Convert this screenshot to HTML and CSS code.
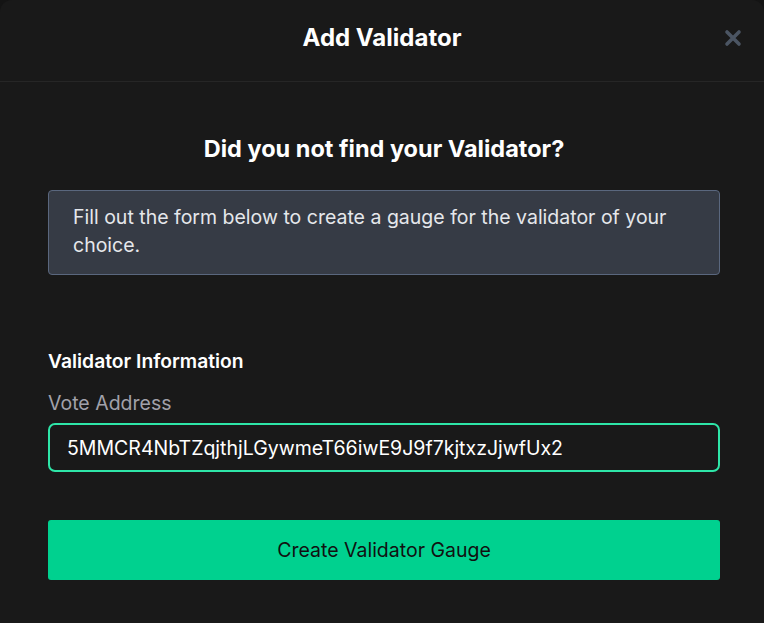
FILE: index.html
```html
<!DOCTYPE html>
<html>
<head>
<meta charset="utf-8">
<link rel="stylesheet" href="styles.css">
</head>
<body>
<div class="modal">
  <header class="modal-header">
    <h1 class="modal-title">Add Validator</h1>
    <button class="close-btn" aria-label="Close">
      <svg width="18" height="18" viewBox="0 0 18 18"><path d="M3 3 L15 15 M15 3 L3 15" stroke="#4b5563" stroke-width="3.6" stroke-linecap="round"/></svg>
    </button>
  </header>
  <div class="modal-body">
    <h2 class="question">Did you not find your Validator?</h2>
    <div class="info-box">Fill out the form below to create a gauge for the validator of your choice.</div>
    <h3 class="section-title">Validator Information</h3>
    <label class="field-label">Vote Address</label>
    <div class="input">5MMCR4NbTZqjthjLGywmeT66iwE9J9f7kjtxzJjwfUx2</div>
    <button class="submit-btn">Create Validator Gauge</button>
  </div>
</div>
</body>
</html>
```
FILE: styles.css
```css
html, body {
  margin: 0;
  padding: 0;
  background: #141414;
  font-family: Inter, "Noto Sans", sans-serif;
}
.modal {
  background: #191919;
  border-radius: 12px 12px 0 0;
  height: 623px;
  box-sizing: border-box;
}
.modal-header {
  height: 81px;
  border-bottom: 1px solid #262626;
  display: flex;
  align-items: center;
  justify-content: center;
  position: relative;
}
.modal-title {
  margin: 0 0 6px 0;
  color: #ffffff;
  font-size: 24px;
  font-weight: 700;
}
.close-btn {
  position: absolute;
  right: 22px;
  top: 29px;
  background: none;
  border: none;
  padding: 0;
  width: 18px;
  height: 18px;
  display: flex;
}
.modal-body {
  padding: 0 44px 0 48px;
  display: flex;
  flex-direction: column;
}
.question {
  margin: 52px 0 0 0;
  text-align: center;
  color: #ffffff;
  font-size: 23.5px;
  font-weight: 700;
  line-height: 30px;
}
.info-box {
  margin-top: 26px;
  background: #363b45;
  border: 1px solid #5a677e;
  border-radius: 4px;
  padding: 12px 24px 15px 24px;
  color: #e5e7eb;
  font-size: 19.5px;
  line-height: 28px;
}
.section-title {
  margin: 72px 0 0 0;
  color: #ffffff;
  font-size: 19.3px;
  font-weight: 600;
  line-height: 28px;
}
.field-label {
  margin-top: 14px;
  color: #a1a1aa;
  font-size: 19.5px;
  line-height: 28px;
}
.input {
  margin-top: 6px;
  height: 49px;
  box-sizing: border-box;
  border: 2px solid #2ee6a8;
  border-radius: 7px;
  padding: 0 17px;
  display: flex;
  align-items: center;
  color: #ffffff;
  font-size: 19.5px;
}
.submit-btn {
  margin-top: 48px;
  height: 60px;
  background: #00d18f;
  border: none;
  border-radius: 3px;
  color: #111111;
  font-family: Inter, "Noto Sans", sans-serif;
  font-size: 19.5px;
}
```
